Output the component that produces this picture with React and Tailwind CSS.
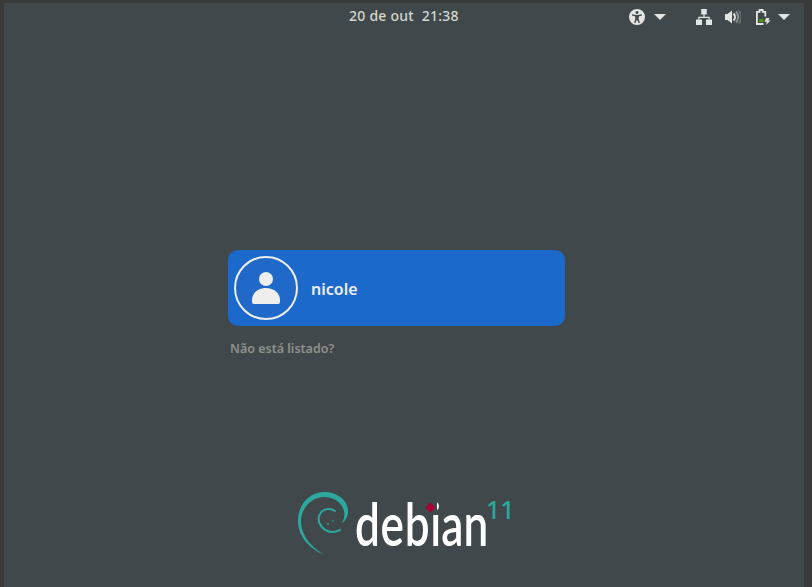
import React from 'react';

const AccessIcon = () => (
  <svg width="16" height="16" viewBox="0 0 16 16">
    <path
      fill="#e4e5e3"
      fillRule="evenodd"
      d="M8 0a8 8 0 1 1 0 16A8 8 0 0 1 8 0zm0 2a1.500 1.500 0 1 0 0 3 1.500 1.500 0 0 0 0-3zM3 5.200v1.200l3.300 1V10l-1.200 4h1.300L8 10.600 9.600 14h1.300l-1.200-4V7.400l3.300-1V5.200L9 6H7z"
    />
  </svg>
);

const Caret = () => (
  <svg width="12" height="6" viewBox="0 0 12 6">
    <path fill="#e4e5e3" d="M0 0h12L6 6z" />
  </svg>
);

const NetworkIcon = () => (
  <svg width="16" height="16" viewBox="0 0 16 16" fill="#e4e5e3">
    <path d="M5.200 0h5.600v5.500H5.200zM7.400 5.500h1.200v2.200h5.100V10.500h-1.200V8.900H3.500V10.500H2.300V7.700h5.100z" />
    <path d="M0 10.500h6V16H0zM10 10.500h6V16h-6z" />
  </svg>
);

const VolumeIcon = () => (
  <svg width="16" height="16" viewBox="0 0 16 16">
    <path fill="#e4e5e3" d="M0 5h2.500L7 1.500v13L2.500 11H0z" />
    <path fill="none" stroke="#e4e5e3" strokeWidth="2" d="M8.500 4.500a5 5 0 0 1 0 7" />
    <path fill="none" stroke="#8f918f" strokeWidth="2" d="M11 2.500a8 8 0 0 1 0 11" />
    <path fill="none" stroke="#6b6e6e" strokeWidth="1.500" d="M13.500 1a11 11 0 0 1 0 14" />
  </svg>
);

const BatteryIcon = () => (
  <svg width="16" height="16" viewBox="0 0 16 16">
    <path
      fill="none"
      stroke="#e4e5e3"
      strokeWidth="1.800"
      d="M8.500 15H1.900V2.900h2.600V1h3.200v1.900h2.600V7.500"
    />
    <path fill="#4e9a06" d="M4 10h4.500v3H4z" />
    <path fill="#e4e5e3" d="M11 9h3.500l-1.200 2.500H15.500L11 16l.8-3.200H9.500z" />
  </svg>
);

const PersonIcon = () => (
  <svg width="28" height="32" viewBox="0 0 28 32">
    <circle cx="14" cy="7" r="7" fill="#eeeeec" />
    <path fill="#eeeeec" d="M14 16c8 0 14 5 14 12v2a2 2 0 0 1-2 2H2a2 2 0 0 1-2-2v-2c0-7 6-12 14-12z" />
  </svg>
);

const Swirl = () => (
  <svg width="56" height="68" viewBox="0 0 56 68">
    <path
      fill="#2ca89e"
      d="M30 65C14 59 3 46 3 31 3 14 15 2 29 2c13 0 24 8 24 19 0 6-3 10-6 12 2-4 3-8 2-12C47 12 38 7 29 7 17 7 6 18 6 31c0 15 11 27 24 34z"
    />
    <path
      fill="none"
      stroke="#2ca89e"
      strokeWidth="2"
      strokeLinecap="round"
      d="M40 21c-4-3-12-3-15 3-4 7 2 18 13 18 3 0 5-1 7-2"
    />
    <circle cx="33" cy="34" r="0.900" fill="#2ca89e" />
    <circle cx="38" cy="31" r="0.800" fill="#2ca89e" />
  </svg>
);

export default function App() {
  return (
    <div
      className="h-[587px] w-[812px] overflow-hidden bg-[#393b3b] pl-1 pt-[3px] pr-2"
      style={{ fontFamily: '"Noto Sans", sans-serif' }}
    >
      <div className="flex h-[584px] flex-col bg-[#41484b]">
        <header className="relative flex h-[27px] shrink-0 items-center justify-end">
          <span className="absolute left-[345px] top-[3px] text-sm font-medium leading-[20px] tracking-[0.25px] text-[#d3d7cf]">
            20 de out&nbsp;&nbsp;21:38
          </span>
          <div className="flex items-center pr-[14px]">
            <AccessIcon />
            <span className="ml-[9px]"><Caret /></span>
            <span className="ml-[30px]"><NetworkIcon /></span>
            <span className="ml-[13px]"><VolumeIcon /></span>
            <span className="ml-[14px]"><BatteryIcon /></span>
            <span className="ml-[7px]"><Caret /></span>
          </div>
        </header>

        <main className="flex flex-1 flex-col pl-[224px] pt-[220px]">
          <button className="flex h-[76px] w-[337px] items-center rounded-[10px] bg-[#1b6acb] pl-[6px] text-left">
            <span className="flex h-16 w-16 items-center justify-center rounded-full border-2 border-[#eeeeec] bg-[#2069c8]">
              <PersonIcon />
            </span>
            <span className="ml-[13px] mt-[2px] text-base font-semibold text-[#eeeeec]">nicole</span>
          </button>
          <span className="ml-[2px] mt-[14px] text-[12.500px] font-semibold leading-[18px] text-[#8f918d]">Não está listado?</span>

          <div className="relative ml-[67px] mt-[132px] flex items-start">
            <Swirl />
            <span
              className="ml-[4px] mt-[-3px] origin-left scale-x-[0.735] text-[60px] font-semibold leading-[72px] text-white"
              style={{ fontFamily: 'Lato, sans-serif' }}
            >
              <span className="tracking-[1px]">deb</span>ian
            </span>
            {/* hides the white i dot, the diamond replaces it */}
            <span className="absolute left-[130px] top-[9px] h-[12px] w-[12px] bg-[#41484b]" />
            <span className="absolute left-[132px] top-[14px] h-[7px] w-[7px] rotate-45 bg-[#a80030]" />
            <span className="absolute left-[191px] top-[5px] text-[25px] font-medium leading-[28px] text-[#2ca89e]">11</span>
          </div>
        </main>
      </div>
    </div>
  );
}
